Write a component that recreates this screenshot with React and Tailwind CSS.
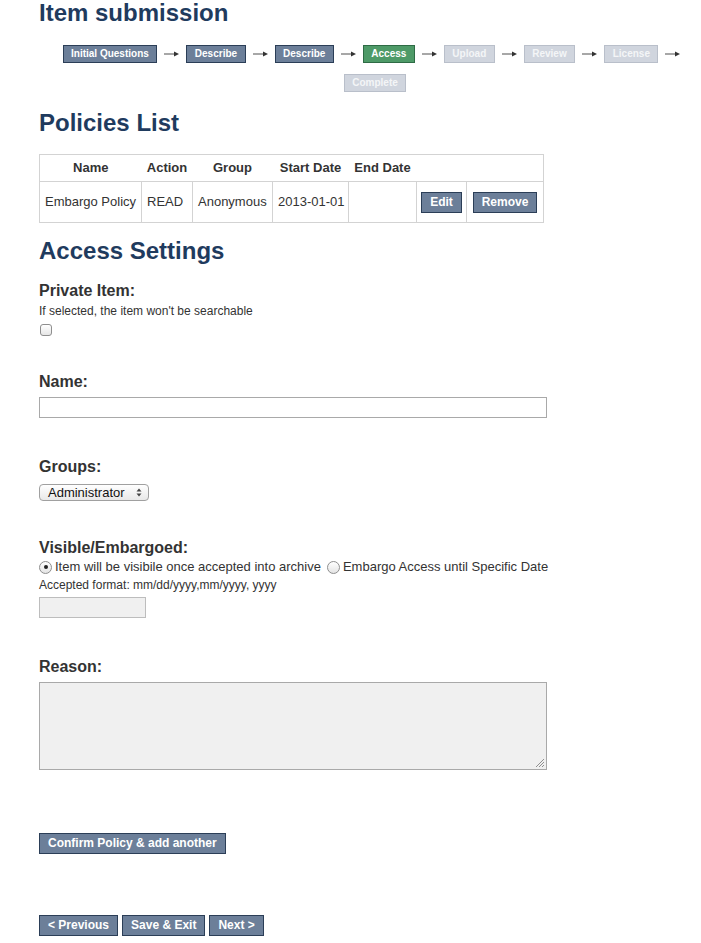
import React from 'react';

const font = { fontFamily: '"Liberation Sans", Arial, Helvetica, sans-serif' };

const steps = [
  { label: 'Initial Questions', state: 'done' },
  { label: 'Describe', state: 'done' },
  { label: 'Describe', state: 'done' },
  { label: 'Access', state: 'current' },
  { label: 'Upload', state: 'todo' },
  { label: 'Review', state: 'todo' },
  { label: 'License', state: 'todo' },
  { label: 'Complete', state: 'todo' },
];

const stepClass = {
  done: 'bg-[#6c7f99] border-[#2b3e57] text-white',
  current: 'bg-[#4e9a68] border-[#2e6b45] text-white',
  todo: 'bg-[#d0d5de] border-[#b9bfca] text-[#f4f5f7]',
};

const Arrow = () => (
  <svg width="15" height="8" viewBox="0 0 15 8" className="mx-[7px]">
    <line x1="0" y1="4" x2="12" y2="4" stroke="#8a8a8a" strokeWidth="1.5" />
    <path d="M10 1.5 L15 4 L10 6.5 Z" fill="#333" />
  </svg>
);

const Button = ({ children, className = '' }) => (
  <button
    className={`bg-[#6c7f99] border border-[#2b3e57] text-white font-bold text-[12px] leading-[15px] px-[8px] py-[2px] whitespace-nowrap ${className}`}
  >
    {children}
  </button>
);

const Label = ({ children, className = '' }) => (
  <div className={`text-[16px] font-bold text-[#333] leading-[18px] ${className}`}>{children}</div>
);

const Heading = ({ children, className = '' }) => (
  <h1 className={`text-[24px] font-bold text-[#1f3b5e] leading-[27px] ${className}`}>{children}</h1>
);

const Radio = ({ checked }) => (
  <span className="inline-flex items-center justify-center w-[13px] h-[13px] rounded-full border border-[#8e8e8e] bg-gradient-to-b from-white to-[#e4e4e4]">
    {checked && <span className="w-[4px] h-[4px] rounded-full bg-[#222]" />}
  </span>
);

export default function App() {
  return (
    <div className="bg-white min-h-[943px] pl-[39px] pb-[7px]" style={font}>
      <Heading className="-mt-[1px]">Item submission</Heading>

      <div className="ml-[10px] mt-[19px] flex flex-wrap justify-center gap-y-[11px]">
        {steps.map((s, i) => (
          <div key={i} className="flex items-center">
            <span
              className={`border font-bold text-[10px] leading-[12px] px-[7.5px] py-[2px] whitespace-nowrap ${stepClass[s.state]}`}
            >
              {s.label}
            </span>
            {i < steps.length - 1 && <Arrow />}
          </div>
        ))}
      </div>

      <Heading className="mt-[17px]">Policies List</Heading>

      <table className="mt-[18px] w-[504px] table-fixed border-collapse border border-[#d3d3d3] text-[13px] text-[#333]">
        <colgroup>
          <col className="w-[102px]" />
          <col className="w-[51px]" />
          <col className="w-[80px]" />
          <col className="w-[76px]" />
          <col className="w-[68px]" />
          <col className="w-[50px]" />
          <col className="w-[77px]" />
        </colgroup>
        <thead>
          <tr className="h-[27px] border-b border-[#d3d3d3]">
            <th className="font-bold text-center">Name</th>
            <th className="font-bold text-center">Action</th>
            <th className="font-bold text-center">Group</th>
            <th className="font-bold text-center whitespace-nowrap">Start Date</th>
            <th className="font-bold text-center whitespace-nowrap">End Date</th>
            <th />
            <th />
          </tr>
        </thead>
        <tbody>
          <tr className="h-[41px]">
            <td className="px-[5px] whitespace-nowrap">Embargo Policy</td>
            <td className="px-[5px] border-l border-[#d3d3d3] whitespace-nowrap">READ</td>
            <td className="px-[5px] border-l border-[#d3d3d3] whitespace-nowrap">Anonymous</td>
            <td className="px-[5px] border-l border-[#d3d3d3] whitespace-nowrap">2013-01-01</td>
            <td className="px-[5px] border-l border-[#d3d3d3]"></td>
            <td className="border-l border-[#d3d3d3] text-center">
              <Button>Edit</Button>
            </td>
            <td className="border-l border-[#d3d3d3] text-center">
              <Button>Remove</Button>
            </td>
          </tr>
        </tbody>
      </table>

      <Heading className="mt-[14px]">Access Settings</Heading>

      <Label className="mt-[18px]">Private Item:</Label>
      <div className="text-[12px] text-[#333] leading-[15px] mt-[4px]">
        If selected, the item won't be searchable
      </div>
      <div className="mt-[5px] ml-[1px] w-[12px] h-[12px] rounded-[3px] border border-[#8e8e8e] bg-gradient-to-b from-white to-[#e6e6e6]" />

      <Label className="mt-[37px]">Name:</Label>
      <div className="mt-[6px] w-[508px] h-[21px] border border-[#a9a9a9] bg-white" />

      <Label className="mt-[40px]">Groups:</Label>
      <div className="mt-[8px] w-[110px] h-[17px] rounded-[4px] border border-[#a0a0a0] bg-gradient-to-b from-white to-[#e8e8e8] flex items-center justify-between pl-[8px] pr-[6px] text-[13px] text-[#111] leading-[15px]">
        <span>Administrator</span>
        <svg width="6" height="9" viewBox="0 0 6 9">
          <path d="M0.5 3.5 L3 0.5 L5.5 3.5 Z" fill="#444" />
          <path d="M0.5 5.5 L3 8.5 L5.5 5.5 Z" fill="#444" />
        </svg>
      </div>

      <Label className="mt-[38px]">Visible/Embargoed:</Label>
      <div className="mt-[2px] flex items-center text-[13px] text-[#333] leading-[16px]">
        <Radio checked />
        <span className="ml-[3px]">Item will be visibile once accepted into archive</span>
        <span className="ml-[6px] flex"><Radio /></span>
        <span className="ml-[3px]">Embargo Access until Specific Date</span>
      </div>
      <div className="mt-[3px] text-[12px] text-[#333] leading-[15px]">
        Accepted format: mm/dd/yyyy,mm/yyyy, yyyy
      </div>
      <div className="mt-[4px] w-[107px] h-[21px] border border-[#bdbdbd] bg-[#f0f0f0]" />

      <Label className="mt-[40px]">Reason:</Label>
      <div className="relative mt-[6px] w-[508px] h-[88px] border border-[#a9a9a9] bg-[#f0f0f0]">
        <svg width="9" height="9" viewBox="0 0 9 9" className="absolute right-[2px] bottom-[2px]">
          <line x1="1" y1="9" x2="9" y2="1" stroke="#777" strokeWidth="0.8" />
          <line x1="4" y1="9" x2="9" y2="4" stroke="#777" strokeWidth="0.8" />
          <line x1="7" y1="9" x2="9" y2="7" stroke="#777" strokeWidth="0.8" />
        </svg>
      </div>

      <div className="mt-[60px]">
        <Button>Confirm Policy &amp; add another</Button>
      </div>

      <div className="mt-[61px] flex gap-[4px]">
        <Button>&lt; Previous</Button>
        <Button>Save &amp; Exit</Button>
        <Button>Next &gt;</Button>
      </div>
    </div>
  );
}
